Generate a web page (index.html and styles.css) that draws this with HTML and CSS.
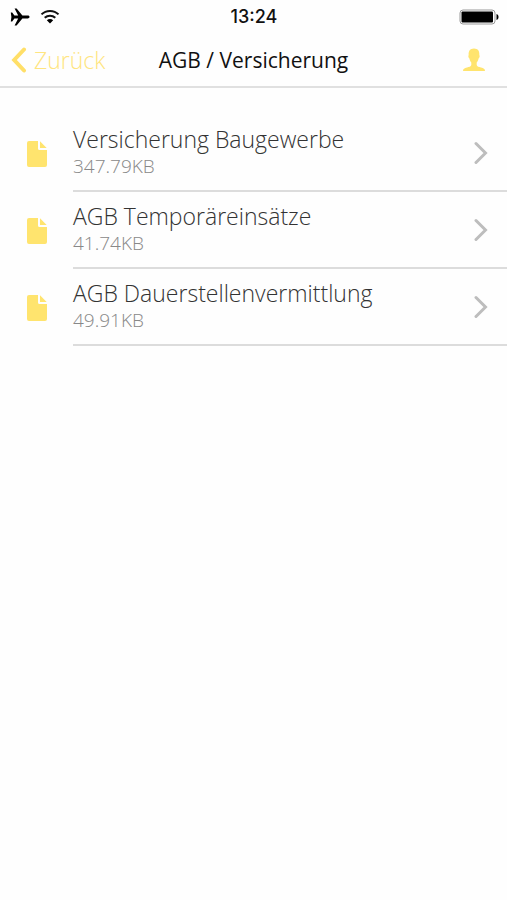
FILE: index.html
```html
<!DOCTYPE html>
<html lang="de">
<head>
<meta charset="utf-8">
<meta name="viewport" content="width=device-width, initial-scale=1">
<title>AGB / Versicherung</title>
<link rel="stylesheet" href="styles.css">
</head>
<body>
<header class="top">
  <div class="status">
    <div class="status-left">
      <svg class="plane" viewBox="0 0 20 18" aria-hidden="true"><path d="M.8 4.500h1.400L4.400 7.600H8.200L4.600.6h2L12.400 7.600h5.300c2.500 0 2.500 2.800 0 2.800h-5.300L6.600 17.400h-2l3.600-7H4.400L2.200 13.500H.8L1.400 9z"/></svg>
      <svg class="wifi" viewBox="0 0 20 16" aria-hidden="true"><path class="wave" d="M1.500 5.400C6 .7 14 .7 18.500 5.400M4.700 8.800c3-2.900 7.600-2.900 10.600 0"/><path d="M6.800 11.300c1.900-1.600 4.500-1.600 6.400 0L10 14.500z"/></svg>
    </div>
    <time class="clock">13:24</time>
    <div class="status-right">
      <svg class="battery" viewBox="0 0 40 16" aria-hidden="true"><rect class="shell" x="1" y="1" width="35" height="14" rx="3"/><rect x="2.500" y="2.500" width="31.500" height="11" rx="1"/><path d="M37.500 5c2.700.5 2.700 5.500 0 6z"/></svg>
    </div>
  </div>
  <nav class="bar">
    <a class="back" href="#"><svg class="back-icon" viewBox="0 0 16 26" aria-hidden="true"><path d="M13 2.500 3.200 13 13 23.500"/></svg>Zurück</a>
    <h1 class="title">AGB / Versicherung</h1>
    <button class="profile" type="button" aria-label="Profil"><svg viewBox="0 0 24 24" aria-hidden="true"><path d="M12 .5c4 0 5.700 2.800 5.300 6.600.8 1.100.2 2.900-.7 3.500-.4 1.800-1 3-1.900 4v2.500c.4 1.500 2.200 2 4.300 2.500 2.600.6 4 1.300 4 3.400H1c0-2.100 1.400-2.800 4-3.400 2.100-.5 3.900-1 4.300-2.500v-2.500c-.9-1-1.500-2.200-1.900-4-.9-.6-1.500-2.400-.7-3.500C6.300 3.300 8 .5 12 .5z"/></svg></button>
  </nav>
</header>
<main>
  <ul class="list">
    <li><a class="row" href="#">
      <svg class="doc" viewBox="0 0 20 26" aria-hidden="true"><path d="M2 0h9v7.500a1.500 1.500 0 0 0 1.500 1.500H20v15a2 2 0 0 1-2 2H2a2 2 0 0 1-2-2V2a2 2 0 0 1 2-2zM13 .3 19.700 7H13z"/></svg>
      <span class="cell"><span class="text"><span class="name">Versicherung Baugewerbe</span><span class="size">347.79KB</span></span>
      <svg class="chevron" viewBox="0 0 14 24" aria-hidden="true"><path d="M2 2.500 11.500 12 2 21.500"/></svg></span>
    </a></li>
    <li><a class="row" href="#">
      <svg class="doc" viewBox="0 0 20 26" aria-hidden="true"><path d="M2 0h9v7.500a1.500 1.500 0 0 0 1.500 1.500H20v15a2 2 0 0 1-2 2H2a2 2 0 0 1-2-2V2a2 2 0 0 1 2-2zM13 .3 19.700 7H13z"/></svg>
      <span class="cell"><span class="text"><span class="name">AGB Temporäreinsätze</span><span class="size">41.74KB</span></span>
      <svg class="chevron" viewBox="0 0 14 24" aria-hidden="true"><path d="M2 2.500 11.500 12 2 21.500"/></svg></span>
    </a></li>
    <li><a class="row" href="#">
      <svg class="doc" viewBox="0 0 20 26" aria-hidden="true"><path d="M2 0h9v7.500a1.500 1.500 0 0 0 1.500 1.500H20v15a2 2 0 0 1-2 2H2a2 2 0 0 1-2-2V2a2 2 0 0 1 2-2zM13 .3 19.700 7H13z"/></svg>
      <span class="cell"><span class="text"><span class="name">AGB Dauerstellenvermittlung</span><span class="size">49.91KB</span></span>
      <svg class="chevron" viewBox="0 0 14 24" aria-hidden="true"><path d="M2 2.500 11.500 12 2 21.500"/></svg></span>
    </a></li>
  </ul>
</main>
</body>
</html>
```
FILE: styles.css
```css
* { box-sizing: border-box; }
body {
  margin: 0;
  background: #fefefe;
  color: #333;
  font-family: "Open Sans", "Liberation Sans", sans-serif;
  font-weight: 300;
}
a { color: inherit; text-decoration: none; }
svg { display: block; flex: none; }

.top { border-bottom: 2px solid #e0e0e0; }
.status, .bar {
  display: grid;
  grid-template-columns: 1fr auto 1fr;
  align-items: center;
}
.status { height: 34px; padding: 0 8px 0 9px; color: #111; }
.status-left { display: flex; align-items: center; gap: 9px; }
.status-right { justify-self: end; }
.plane { width: 22px; height: 18px; }
.wifi { width: 20px; height: 16px; }
.wave { fill: none; stroke: #111; stroke-width: 2; }
.battery { width: 40px; height: 16px; }
.shell { fill: #fff; stroke: #999; stroke-width: 1; }
.clock { font: 500 18px/24px Inter, "Liberation Sans", sans-serif; }

.bar { height: 52px; padding: 0 11px; }
.back {
  display: flex;
  align-items: center;
  gap: 7px;
  color: #ffe580;
  font-size: 23px;
  line-height: 28px;
}
.back-icon { width: 16px; height: 26px; fill: none; stroke: #ffdf68; stroke-width: 4; stroke-linecap: round; }
.title { margin: 0; color: #111; font-size: 21px; font-weight: 400; line-height: 28px; }
.profile { justify-self: end; margin-right: 9px; padding: 0; border: 0; background: none; }
.profile svg { width: 26px; height: 24px; fill: #ffe46e; }

.list { margin: 0; padding: 27px 0 0; list-style: none; }
.row { display: flex; align-items: center; padding-left: 27px; }
.doc { width: 20px; height: 26px; margin-right: 26px; fill: #ffe46e; }
.cell {
  flex: 1;
  display: flex;
  align-items: center;
  justify-content: space-between;
  height: 77px;
  padding-right: 19px;
  border-bottom: 2px solid #dcdcdc;
}
.text { display: flex; flex-direction: column; padding-bottom: 1px; }
.name { font-size: 23px; line-height: 28px; }
.size { color: #888; font-size: 19px; line-height: 26px; }
.chevron { width: 14px; height: 24px; fill: none; stroke: #bdbdbd; stroke-width: 3; stroke-linecap: round; }
```
